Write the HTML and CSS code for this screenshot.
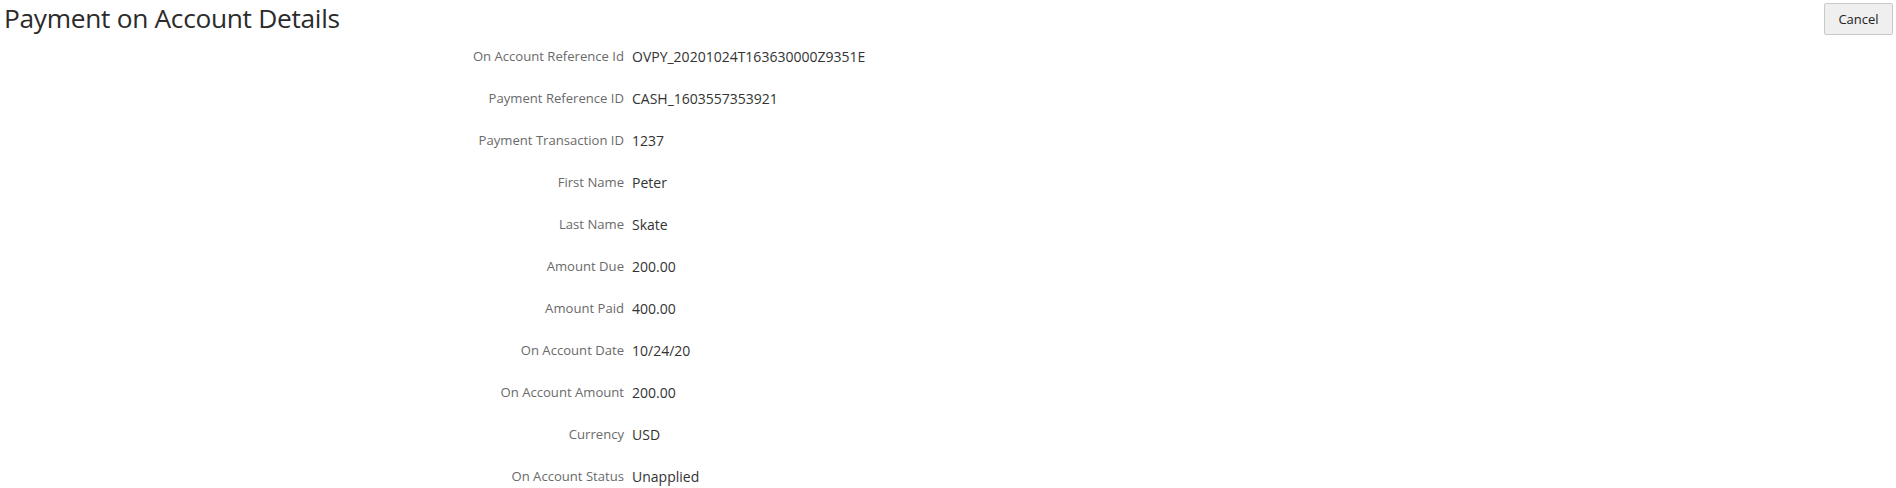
FILE: index.html
```html
<!DOCTYPE html>
<html lang="en">
<head>
<meta charset="utf-8">
<title>Payment on Account Details</title>
<link rel="stylesheet" href="styles.css">
</head>
<body>
<div class="page">
  <header class="header">
    <h1 class="title">Payment on Account Details</h1>
    <button class="btn" type="button">Cancel</button>
  </header>
  <div class="form">
    <div class="label">On Account Reference Id</div><div class="value">OVPY_20201024T163630000Z9351E</div>
    <div class="label">Payment Reference ID</div><div class="value">CASH_1603557353921</div>
    <div class="label">Payment Transaction ID</div><div class="value">1237</div>
    <div class="label">First Name</div><div class="value">Peter</div>
    <div class="label">Last Name</div><div class="value">Skate</div>
    <div class="label">Amount Due</div><div class="value">200.00</div>
    <div class="label">Amount Paid</div><div class="value">400.00</div>
    <div class="label">On Account Date</div><div class="value">10/24/20</div>
    <div class="label">On Account Amount</div><div class="value">200.00</div>
    <div class="label">Currency</div><div class="value">USD</div>
    <div class="label">On Account Status</div><div class="value">Unapplied</div>
  </div>
</div>
</body>
</html>
```

FILE: styles.css
```css
html, body {
  margin: 0;
  padding: 0;
  background: #ffffff;
}

body {
  font-family: "Open Sans", "Noto Sans", "Liberation Sans", sans-serif;
  color: #333333;
}

.page {
  display: flex;
  flex-direction: column;
}

.header {
  display: flex;
  justify-content: space-between;
  align-items: flex-start;
  height: 35px;
  padding: 0 3px 0 4px;
}

.title {
  margin: 0;
  font-size: 26.3px;
  font-weight: 400;
  line-height: 36px;
  color: #2b2b2b;
  letter-spacing: -0.3px;
}

.btn {
  margin-top: 3px;
  width: 69px;
  height: 32px;
  padding: 0;
  font-family: inherit;
  font-size: 13px;
  color: #222222;
  background: #efefef;
  border: 1px solid #c9c9c9;
  border-radius: 2px;
}

.form {
  display: grid;
  grid-template-columns: 624px auto;
  column-gap: 8px;
  grid-auto-rows: 42px;
  align-items: center;
}

.label {
  text-align: right;
  color: #6a6a6a;
  font-size: 13.1px;
}

.value {
  color: #333333;
  font-size: 14px;
}
```
